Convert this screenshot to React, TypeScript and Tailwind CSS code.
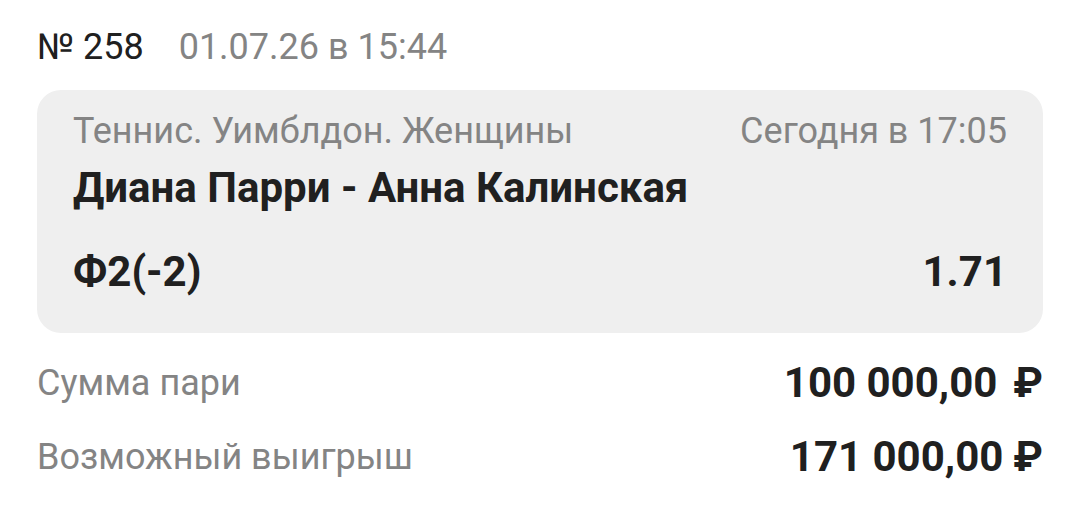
export default function App() {
  return (
    <div
      className="w-[1080px] h-[509px] bg-white overflow-hidden px-[37px] pt-[23px]"
      style={{ fontFamily: "Roboto, 'Noto Sans', sans-serif" }}
    >
      {/* Bet number and placement time */}
      <div className="flex items-center gap-[35px] text-[36px] leading-[48px]">
        <span className="text-[#202020]">№ 258</span>
        <span className="text-[#848484]">01.07.26 в 15:44</span>
      </div>

      {/* Event card */}
      <div className="mt-[19px] rounded-[24px] bg-[#efefef] px-[36px] pt-[19px] pb-[35px]">
        <div className="flex items-center justify-between text-[36px] leading-[44px] text-[#848484]">
          <span>Теннис. Уимблдон. Женщины</span>
          <span>Сегодня в 17:05</span>
        </div>
        <div className="mt-[9px] text-[42px] leading-[52px] font-bold text-[#202020]">
          Диана Парри - Анна Калинская
        </div>
        <div className="mt-[32px] flex items-center justify-between text-[42px] leading-[52px] font-bold text-[#202020]">
          <span>Ф2(-2)</span>
          <span>1.71</span>
        </div>
      </div>

      {/* Stake and payout */}
      <div className="mt-[24px] flex flex-col gap-[22px]">
        <div className="flex items-center justify-between leading-[52px]">
          <span className="text-[36px] text-[#848484]">Сумма пари</span>
          <span className="text-[42px] font-bold text-[#202020]">
            100 000,00<span className="ml-[16px]">₽</span>
          </span>
        </div>
        <div className="flex items-center justify-between leading-[52px]">
          <span className="text-[36px] text-[#848484]">Возможный выигрыш</span>
          <span className="text-[42px] font-bold text-[#202020]">
            171 000,00<span className="ml-[10px]">₽</span>
          </span>
        </div>
      </div>
    </div>
  );
}
